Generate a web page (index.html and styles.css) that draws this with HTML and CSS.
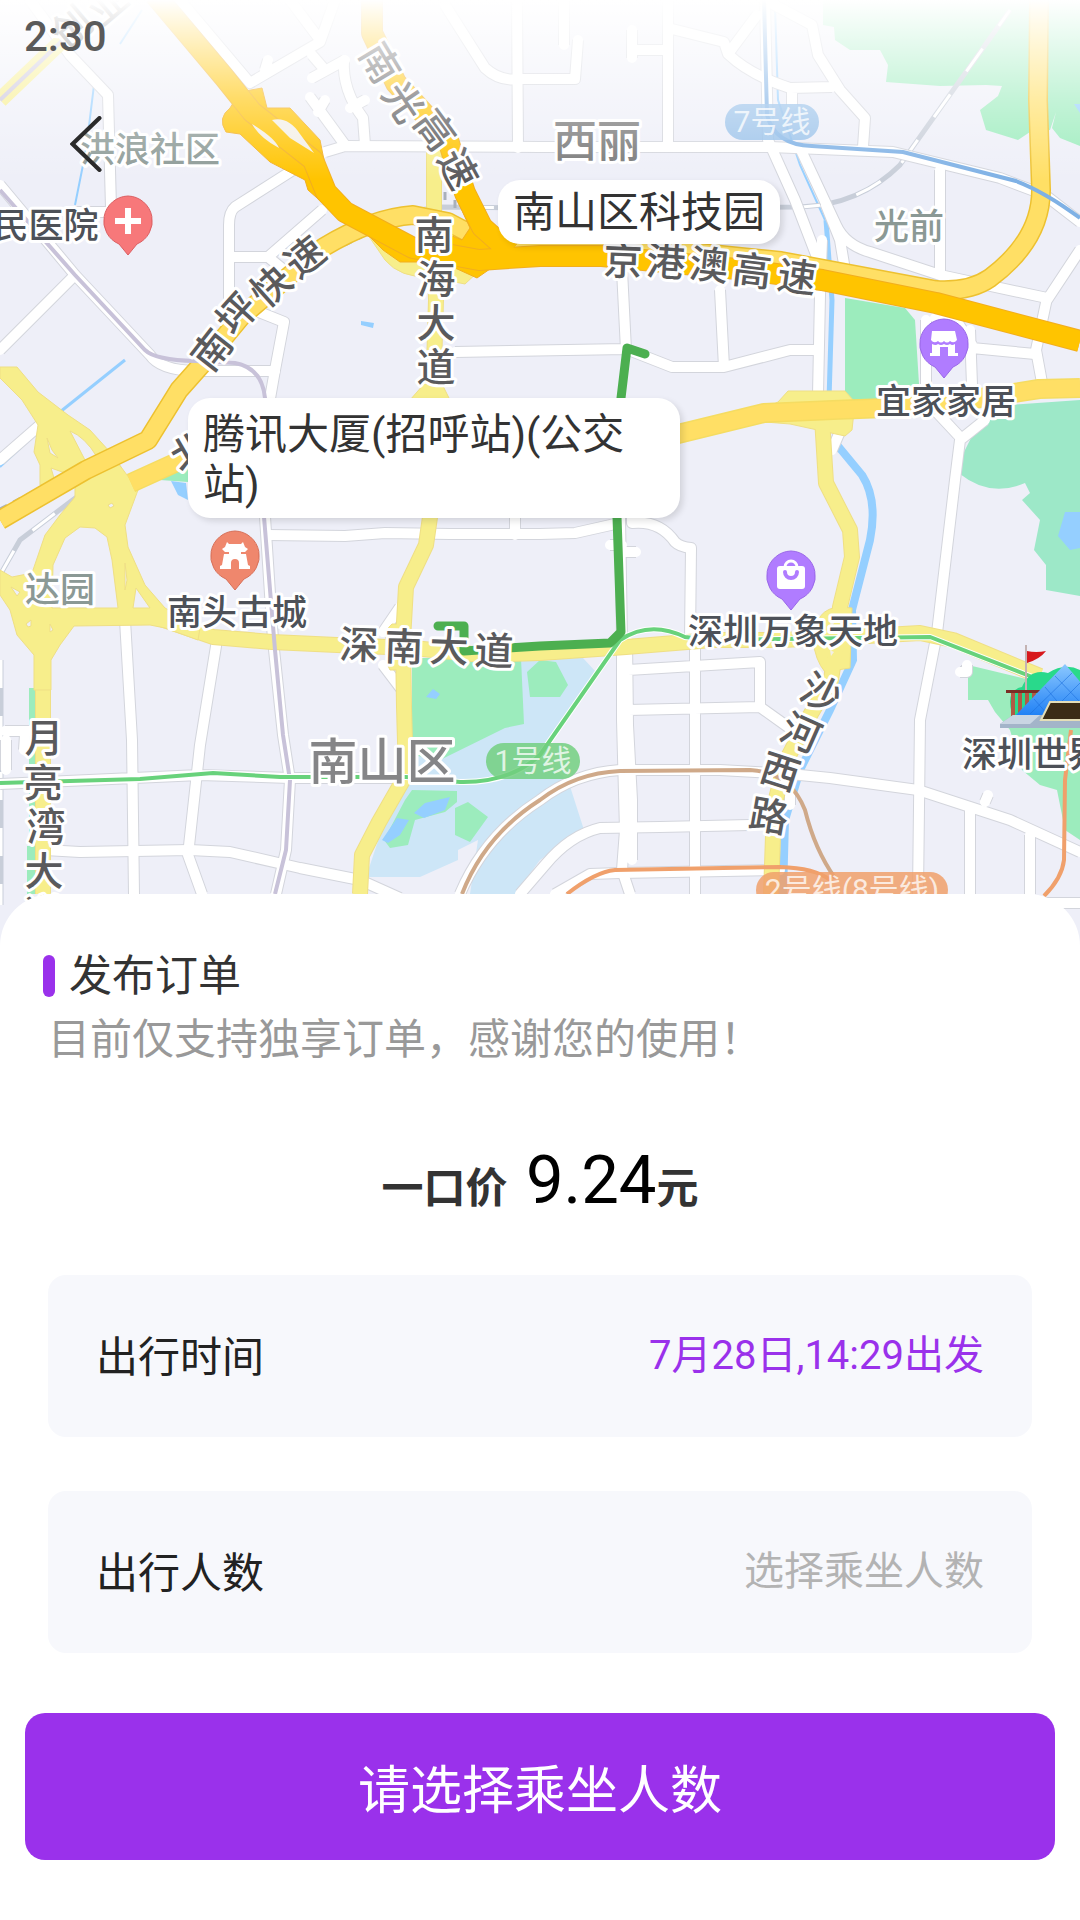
FILE: index.html
```html
<!DOCTYPE html>
<html lang="zh-CN">
<head>
  <meta charset="UTF-8">
  <meta name="viewport" content="width=device-width, initial-scale=1.0">
  <title>发布订单</title>
  <link rel="stylesheet" href="styles.css">
</head>
<body>
  <div class="map">
    <svg class="map-canvas" viewBox="0 0 1080 950">
      <defs>
        <linearGradient id="fade" x1="0" y1="0" x2="0" y2="1">
          <stop offset="0" stop-color="#fff"/>
          <stop offset="0.2" stop-color="#fff" stop-opacity="0.76"/>
          <stop offset="0.5" stop-color="#fff" stop-opacity="0.4"/>
          <stop offset="0.9" stop-color="#fff" stop-opacity="0"/>
        </linearGradient>
        <linearGradient id="glass" x1="0" y1="0" x2="0" y2="1">
          <stop offset="0" stop-color="#8cc8ff"/>
          <stop offset="1" stop-color="#1f80f5"/>
        </linearGradient>

        <!-- 普通道路 -->
        <g id="streets">
          <path d="M30 0 L70 55 L108 95 L111 208 M0 185 L75 275 L150 355 Q160 370 195 371 L275 371 M75 275 L0 350 M65 212 H108"/>
          <path d="M0 460 L40 425 M325 152 L345 146 L540 147 L770 147 L893 152 L1000 178 L1045 195 L1080 222"/>
          <path d="M293 170 L235 207 Q229 212 229 225 L229 300 L284 322 L275 370 L268 410 M232 257 L268 257 L322 210 M268 257 L290 275"/>
          <path d="M180 0 L250 83 L320 42 L335 0 M290 0 L320 40 M265 70 L268 60"/>
          <path d="M445 5 L485 68 Q500 82 520 79 L540 79 L575 79 L578 40 M517 0 L518 148"/>
          <path d="M344 60 Q342 90 363 118 L365 145 M310 97 L345 145 M345 60 L312 78 M365 100 L350 108 M325 100 L318 112 M312 55 L325 70"/>
          <path d="M564 0 V45 M668 0 L668 147 M632 30 L632 58 M632 50 H665 M668 28 L724 42 L728 54 Q750 75 790 88 L832 87 M728 54 L757 15 M765 0 L812 25 L818 55 L840 90 L865 118 L863 147 M792 88 L792 105"/>
          <path d="M765 0 L768 140 L795 200 L820 265 M800 148 L836 225 Q845 245 870 252 L940 275 L1047 298 M940 170 L940 272 L960 310 M1047 300 L1080 250 M1047 298 L1036 350 L1043 388"/>
          <path d="M822 240 L820 295 L818 395 M826 205 L840 240 L845 270 M622 270 L626 350 M720 290 L724 367 M455 352 L626 349 L672 367 L724 367 L790 350 L818 350"/>
          <path d="M926 320 L926 385 M970 330 L972 385 M972 348 L1035 354 M956 320 L972 345 M935 318 H955"/>
          <path d="M985 420 L960 440 L955 480 L937 633 L920 720 L918 894 M958 435 L930 405 M845 420 L832 450"/>
          <path d="M268 535 L345 536 L385 533 L450 534 L540 534 L575 533 L615 524 M515 517 V535 M632 517 V523 Q660 520 675 542 Q680 547 691 548 L690 640 M610 545 H622 M622 552 H636 M620 517 L622 640"/>
          <path d="M125 620 L132 740 L134 894 M217 640 L200 745 L188 855 L202 894 M0 784 L45 782 L200 775 L290 778 L410 778"/>
          <path d="M45 850 L80 852 L190 850 L230 852 L300 868 L360 880 L400 898 M265 517 L273 640 L283 735 L290 780 L286 850 L276 894"/>
          <path d="M6 740 L6 770 M5 731 H35 M25 735 L24 750 M400 607 L383 632 M383 665 L402 690"/>
          <path d="M622 650 L622 720 L625 830 L622 870 L630 894 M627 640 L628 725 L632 800 L632 860 M695 640 V894 M628 670 L760 662 L760 707 L795 732 M628 710 L760 707"/>
          <path d="M460 894 Q485 835 540 800 Q575 773 620 770 L720 770 L790 774 L830 778 L918 790 L1010 820 L1080 852"/>
          <path d="M520 894 L545 865 Q570 835 600 828 L660 827 L750 825 M555 894 L590 874 L620 873 L780 870 M970 810 V894 M1030 835 V894 M985 802 L988 795 M967 665 L967 672 H960 M1045 903 H1080 M790 790 V805"/>
        </g>
        <!-- 黄色主干道 -->
        <g id="avenues">
          <path d="M434 143 L434 215 L436 300 L433 400 L430 517 L426 545 L406 587 L403 640 L404 707 L406 775 L379 822 L362 855 L360 894"/>
          <path d="M60 617 L155 617 L213 637 L272 642 L337 645 L413 648 L482 655 L540 653 L626 647 L712 640 L781 640 L850 637 L920 633 L953 640 L1040 676"/>
          <path d="M822 418 L826 483 L850 530 L852 557 L840 607 L836 647 L831 680 L809 717 L785 763 L774 807 L771 894"/>
          <path d="M43 680 V894"/>
        </g>
        <path id="expressway" d="M0 520 L86 470 L148 440 L179 390 L203 363 L241 317 L296 270 L324 247 Q372 218 413 215 L448 222 L482 240 L540 248 L643 247 L781 261 L936 290 Q970 292 990 278 Q1041 240 1041 190 L1038 100 L1039 0"/>
        <path id="expressway2" d="M131 483 L186 458 L300 430 L678 434 L764 413 L833 410 L912 407 L988 397 L1039 389 L1080 388"/>
        <path id="freeway" d="M155 -5 L224 77 L252 112 L313 160 L326 192 L345 212 L413 248 L479 260 L540 256 L602 256 L747 270 L822 280 L936 303 L1080 341"/>
        <path id="freeway2" d="M372 -5 L372 33 L396 83 L448 140 L465 193 L482 227 L510 252"/>
      </defs>

      <rect class="land" width="1080" height="950"/>

      <!-- 绿地 -->
      <path class="park" d="M823 0 H1080 V146 L1060 138 L1052 128 L1056 112 L1050 130 L1030 132 L1018 140 L986 130 L980 110 L998 96 L1002 86 L986 85 L940 86 L886 82 L888 65 L880 50 L850 50 L835 40 L834 27 L823 25 Z"/>
      <path class="park" d="M845 298 L905 308 L915 320 L920 400 H845 Z"/>
      <path class="park-deep" d="M1080 400 L1010 405 L975 430 L960 460 L960 474 Q990 498 1025 483 L1030 493 L1022 500 L1040 520 L1034 550 L1046 565 L1046 590 L1080 596 Z"/>
      <path class="park" d="M968 665 L1030 680 L1080 700 V840 L1065 830 L1057 790 L1040 785 L1022 770 L1010 730 L995 712 L988 700 L968 700 Z"/>
      <path class="park" d="M29 688 H36 V894 H27 V846 H29 Z M160 480 L188 460 V482 Z"/>
      <path class="bay" d="M412 720 L540 650 L583 658 L596 672 L540 760 L568 780 L584 830 L540 860 L515 894 H470 L478 840 L458 850 L458 860 L420 877 L366 877 L380 835 L408 775 Z"/>
      <path class="park" d="M412 658 H521 L524 724 L505 728 L440 760 L412 755 Z"/>
      <path class="park" d="M527 672 L540 660 L556 662 L568 685 L560 697 L530 697 Z M405 800 L412 790 L457 791 V802 L445 812 L415 820 L408 845 L390 848 L384 840 Z M455 808 L468 802 L488 817 L470 842 L455 835 Z"/>
      <path class="river" d="M414 813 L425 803 L450 797 L445 810 L424 818 Z M382 840 L397 818 L409 820 L400 835 L388 843 Z M426 697 L433 689 L440 694 L436 699 Z M171 481 L186 483 L188 500 L178 495 Z M361 321 L374 323 L373 328 L361 325 Z M1065 512 H1080 V548 L1070 550 L1058 536 Z M1074 104 H1080 V113 Z"/>
      <path class="canal thin" d="M94 85 L86 150 L75 205 M142 10 L120 44 M60 412 L0 467 M775 5 L778 100 L800 165 L825 220"/>
      <path class="canal narrow" d="M125 360 L60 412"/>
      <path class="canal" d="M826 220 L832 300 L829 400"/>
      <path class="canal wide" d="M833 440 L862 475 Q878 500 870 540 L852 610 L853 660 L830 710 L800 770 L785 820 L783 894"/>

      <!-- 铁路 -->
      <path class="rail" d="M360 235 L400 213 L440 207 L540 208 L800 207 Q860 205 900 165 L1010 10 M0 575 L20 540 L70 502 L120 465 M1 660 V905"/>
      <path class="rail-dash" d="M360 235 L400 213 L440 207 L540 208 L800 207 Q860 205 900 165 L1010 10 M0 575 L20 540 L70 502 L120 465 M1 660 V905"/>
      <path class="rail-dots" d="M0 509 L75 470 M345 245 L375 230 M445 192 V205 M455 200 V212"/>

      <use class="street-edge" href="#streets"/>
      <use class="street" href="#streets"/>
      <use class="avenue-edge" href="#avenues"/>
      <path class="junction" d="M778 402 L788 391 L845 391 L855 402 L852 430 L845 436 L790 424 L740 420 Z M840 607 Q815 608 813 640 Q815 660 825 672 L850 668 L852 608 Z M392 624 L403 624 V670 L390 670 Q384 660 386 645 Q384 630 392 624 Z M368 235 L385 260 Q400 278 430 277 L465 284 L480 270 Z M424 384 L410 400 H450 L442 384 Z"/>
      <use class="avenue" href="#avenues"/>
      <path class="avenue-side" d="M0 100 L65 38"/>
      <!-- 立交桥 -->
      <path class="junction" fill-rule="evenodd" d="M0 367 H17 L38 392 L68 415 L90 430 L110 452 L138 490 L125 525 L128 547 L145 585 L165 608 L200 628 L198 640 L165 628 L150 625 L74 626 L60 645 L51 660 L51 690 H34 V655 L17 635 L10 610 L0 595 V570 L12 577 L32 573 L45 535 L60 515 L75 497 L75 485 H40 V465 L34 452 L38 425 L22 400 L0 378 Z
        M52 608 L53 565 L65 538 L80 527 L95 528 L107 537 L112 560 L118 608 Z
        M136 588 L133 608 H150 Z M125 563 L127 580 L125 590 Z
        M47 438 L52 450 L58 458 L50 453 Z M51 468 L68 474 L54 478 Z M70 431 L85 460 L97 457 Q85 437 70 431 Z
        M108 505 L112 503 L114 506 L110 508 Z M11 587 L20 592 L17 596 Z M26 624 L31 620 L31 626 L28 627 Z M50 624 L53 630 L50 632 Z"/>
      <path class="gap" d="M830 621 L834 623 L831 628 Z M830 650 L834 652 L831 656 Z"/>

      <use class="expressway-edge" href="#expressway"/>
      <use class="expressway-edge soft" href="#expressway2"/>
      <use class="expressway" href="#expressway2"/>
      <use class="expressway" href="#expressway"/>
      <path class="knot" d="M240 92 L262 88 L267 108 L290 108 L320 140 L330 190 L375 222 L420 240 L450 235 L462 240 L470 228 L455 195 L470 190 L485 222 L500 228 V262 L477 278 L455 268 L420 262 L400 262 L383 250 L365 232 L325 205 L308 190 L305 180 L270 162 L240 134 L226 132 Q217 118 230 108 Z"/>
      <use class="freeway-edge" href="#freeway"/>
      <use class="freeway-edge" href="#freeway2"/>
      <use class="freeway" href="#freeway2"/>
      <use class="freeway" href="#freeway"/>
      <path class="gap" d="M272 120 Q288 116 300 134 L314 153 L290 138 Z M252 124 Q275 138 279 148 Q260 138 252 124 Z"/>

      <!-- 地铁 -->
      <path class="metro metro-gray" d="M0 190 L75 275 L145 350 Q155 360 195 361 L235 363 Q262 368 265 398 L264 517 L275 650 L283 735 L290 780 L286 850 L275 894"/>
      <path class="metro metro-gray" d="M0 100 L65 38"/>
      <path class="metro metro-blue" d="M764 0 L767 115 Q775 145 812 146 L903 152 L1016 181 Q1045 192 1080 218"/>
      <path class="metro-line-edge" d="M0 783 L140 779 L213 773 L280 777 L406 777 L460 782 Q510 783 540 755 L620 640 Q650 620 685 637 L712 640 L930 637 L1040 680"/>
      <path class="metro metro-green" d="M0 783 L140 779 L213 773 L280 777 L406 777 L460 782 Q510 783 540 755 L620 640 Q650 620 685 637 L712 640 L930 637 L1040 680"/>
      <path class="metro metro-brown" d="M462 894 Q485 835 540 800 Q575 773 620 771 L750 770 Q790 772 805 810 Q815 850 835 878"/>
      <path class="metro metro-orange" d="M567 894 Q595 872 615 870 L780 867 Q815 868 830 880 M1071 730 L1065 780 L1064 860 Q1062 878 1044 896"/>

      <!-- 行车路线 -->
      <path class="route" d="M645 354 L627 348 L621 398 L617 517 L621 632 L610 643 L540 646 L464 651 L464 626 H438"/>

      <!-- 世界之窗 -->
      <g class="landmark">
        <path fill="#29d98b" d="M1012 714 Q1005 690 1022 687 Q1030 668 1048 673 Q1065 662 1080 670 V715 H1012 Z"/>
        <path d="M1013 692 V716 M1020 692 V716 M1027 692 V716 M1034 692 V716" stroke="#b05a45" stroke-width="4"/>
        <rect x="1006" y="690" width="34" height="3" fill="#7a2f25"/>
        <path d="M1026 645 V690" stroke="#c4b3b3" stroke-width="2"/>
        <path fill="#d7181c" d="M1027 651 Q1036 653 1046 651 Q1040 659 1027 663 Z"/>
        <path fill="url(#glass)" d="M1065 664 L1100 705 L1080 716 H1015 Z"/>
        <path d="M1055 676 L1080 702 M1045 687 L1068 714 M1034 699 L1048 715 M1072 673 L1030 714 M1080 683 L1048 715" stroke="#1c6fdd" stroke-opacity="0.6"/>
        <path fill="#a3b4c9" d="M1000 724 L1013 715 H1080 V728 H1000 Z"/>
        <path fill="#c9d5e3" d="M1000 724 L1013 715 H1040 L1030 724 Z"/>
        <path fill="#3b2c16" stroke="#e4deb8" stroke-width="2" d="M1050 702 H1090 V720 H1041 Z"/>
      </g>

      <!-- 地点标记 -->
      <g class="pin pin-red" transform="translate(128 221)">
        <path d="M0 -25 A25 25 0 0 1 9 23 L0 34 L-9 23 A25 25 0 0 1 0 -25 Z"/>
        <path class="pin-icon" d="M-3 -13 H3 V-3 H13 V3 H3 V13 H-3 V3 H-13 V-3 H-3 Z"/>
      </g>
      <g class="pin pin-coral" transform="translate(235 556)">
        <path d="M0 -25 A25 25 0 0 1 9 23 L0 34 L-9 23 A25 25 0 0 1 0 -25 Z"/>
        <path class="pin-icon" d="M-8 -14 L-6 -12 H6 L8 -14 L10 -9 L13 -7 L10 -4 H6 V-2 H11 L13 9 L15 10 V13 H4 V7 A4 4 0 0 0 -4 7 V13 H-15 V10 L-13 9 L-11 -2 H-6 V-4 H-10 L-13 -7 L-10 -9 Z"/>
      </g>
      <g class="pin pin-purple" transform="translate(944 344)">
        <path d="M0 -25 A25 25 0 0 1 9 23 L0 34 L-9 23 A25 25 0 0 1 0 -25 Z"/>
        <path class="pin-icon" d="M-12 -13 H11 L13 -4 Q10 0 6 -3 Q3 0 0 -3 Q-3 0 -6 -3 Q-10 0 -13 -4 Z M-12 0 Q-8 2 -6 0 Q-3 2 0 0 Q3 2 6 0 Q8 2 11 0 V9 H14 V12 H4 V3 H-4 V12 H-14 V9 H-12 Z"/>
      </g>
      <g class="pin pin-purple" transform="translate(791 576)">
        <path d="M0 -25 A25 25 0 0 1 9 23 L0 34 L-9 23 A25 25 0 0 1 0 -25 Z"/>
        <rect class="pin-icon" x="-14" y="-10" width="28" height="23" rx="3"/>
        <path class="pin-handle" d="M-6 -9 A6 6 0 0 1 6 -9"/>
        <path class="pin-smile" d="M-6 -4 A6 6 0 0 0 6 -4"/>
      </g>

      <!-- 地铁线路名 -->
      <g class="line-tag">
        <rect x="725" y="104" width="94" height="36" rx="18" fill="#8dbbe8"/>
        <text x="772" y="132">7号线</text>
        <rect x="486" y="743" width="94" height="36" rx="18" fill="#72cf80"/>
        <text x="533" y="771">1号线</text>
        <rect x="756" y="872" width="192" height="36" rx="18" fill="#f0a06b"/>
        <text x="852" y="900">2号线(8号线)</text>
      </g>

      <!-- 道路名 -->
      <g class="road-name">
        <text transform="translate(72 27) rotate(-40)" y="14">创</text>
        <text transform="translate(108 4) rotate(-40)" y="14">业</text>
        <text transform="translate(380 63) rotate(59)" y="14">南</text>
        <text transform="translate(403 102) rotate(56)" y="14">光</text>
        <text transform="translate(435 130) rotate(54)" y="14">高</text>
        <text transform="translate(458 169) rotate(62)" y="14">速</text>
        <text transform="translate(212 350) rotate(-52)" y="14">南</text>
        <text transform="translate(237 314) rotate(-48)" y="14">坪</text>
        <text transform="translate(271 286) rotate(-42)" y="14">快</text>
        <text transform="translate(305 257) rotate(-38)" y="14">速</text>
        <text x="434" y="249">南</text>
        <text x="436" y="293">海</text>
        <text x="436" y="337">大</text>
        <text x="436" y="381">道</text>
        <text transform="translate(623 261) rotate(2)" y="14">京</text>
        <text transform="translate(666 262) rotate(4)" y="14">港</text>
        <text transform="translate(709 265) rotate(6)" y="14">澳</text>
        <text transform="translate(752 271) rotate(7)" y="14">高</text>
        <text transform="translate(797 277) rotate(8)" y="14">速</text>
        <text transform="translate(821 693) rotate(26)" y="14">沙</text>
        <text transform="translate(801 733) rotate(24)" y="14">河</text>
        <text transform="translate(780 772) rotate(18)" y="14">西</text>
        <text transform="translate(769 816) rotate(10)" y="14">路</text>
        <text transform="translate(359 645) rotate(2)" y="14">深</text>
        <text transform="translate(404 647) rotate(2)" y="14">南</text>
        <text transform="translate(449 648) rotate(2)" y="14">大</text>
        <text transform="translate(494 651) rotate(2)" y="14">道</text>
        <text x="44" y="752">月</text>
        <text x="43" y="797">亮</text>
        <text x="46" y="841">湾</text>
        <text x="44" y="885">大</text>
        <text x="44" y="928">道</text>
        <text transform="translate(191 452) rotate(-30)" y="14">北</text>
      </g>

      <!-- 地名 -->
      <g class="place-name">
        <text x="150" y="162">洪浪社区</text>
        <text x="909" y="239">光前</text>
        <text x="60" y="602">达园</text>
      </g>
      <g class="poi-name">
        <text x="46" y="238">民医院</text>
        <text x="946" y="414">宜家家居</text>
        <text x="237" y="625">南头古城</text>
        <text x="793" y="644">深圳万象天地</text>
        <text x="1032" y="767">深圳世界</text>
      </g>
      <text class="town-name" x="597" y="157">西丽</text>
      <text class="district-name" x="382" y="779">南山区</text>

      <rect width="1080" height="200" fill="url(#fade)"/>
    </svg>

    <div class="status-time">2:30</div>
    <button class="back" aria-label="返回">
      <svg viewBox="0 0 30 54"><path d="M28 2 L2 27 L28 52"/></svg>
    </button>
    <div class="bubble bubble-end">南山区科技园</div>
    <div class="bubble bubble-start">腾讯大厦(招呼站)(公交站)</div>
  </div>

  <form class="sheet">
    <h1 class="title">发布订单</h1>
    <p class="tip">目前仅支持独享订单，感谢您的使用！</p>
    <p class="price"><b>一口价</b> <span class="amount">9.24</span><b>元</b></p>
    <div class="field">
      <label for="tripTime">出行时间</label>
      <input id="tripTime" type="text" value="7月28日,14:29出发" readonly>
    </div>
    <div class="field">
      <label for="tripPeople">出行人数</label>
      <input id="tripPeople" type="text" placeholder="选择乘坐人数" readonly>
    </div>
    <button class="submit" type="button">请选择乘坐人数</button>
  </form>
</body>
</html>
```
FILE: styles.css
```css
* {
  box-sizing: border-box;
}
body {
  margin: 0;
  background: #fff;
  font-family: Roboto, "Noto Sans CJK SC", sans-serif;
  color: #333;
}
.map {
  position: relative;
  overflow: hidden;
}
.map-canvas {
  display: block;
  width: 100%;
  height: auto;
}

/* 地图底图 */
.land { fill: #eeeff8; }
.park { fill: #9cecbd; }
.park-deep { fill: #9de8c8; }
.bay { fill: #cde6f7; }
.river { fill: #95cfff; }
.canal {
  fill: none;
  stroke: #95cfff;
  stroke-width: 5;
}
.canal.thin { stroke-width: 2; }
.canal.narrow { stroke-width: 3; }
.canal.wide { stroke-width: 8; }
.rail, .rail-dash, .rail-dots {
  fill: none;
  stroke: #c8ced9;
  stroke-width: 5;
}
.rail-dash {
  stroke: #fff;
  stroke-width: 3;
  stroke-dasharray: 28 28;
}
.rail-dots {
  stroke: #a9b0bb;
  stroke-width: 3;
  stroke-dasharray: 8 7;
}
.street, .street-edge, .avenue, .avenue-edge,
.expressway, .expressway-edge, .freeway, .freeway-edge {
  fill: none;
  stroke-linejoin: round;
}
.street-edge { stroke: #d3d5dc; stroke-width: 12; }
.street { stroke: #fff; stroke-width: 10; stroke-linecap: round; }
.avenue-edge { stroke: #efdf85; stroke-width: 16; }
.avenue { stroke: #f7ee8b; stroke-width: 14; }
.avenue-side { stroke: #f7ee8b; stroke-width: 16; }
.junction { fill: #f7ee8b; stroke: #efdf85; }
.expressway-edge { stroke: #edc130; stroke-width: 20; }
.expressway-edge.soft { stroke: #f5dc62; }
.expressway { stroke: #ffdf65; stroke-width: 17; }
.freeway-edge { stroke: #f2ae1e; stroke-width: 22; }
.freeway { stroke: #ffc400; stroke-width: 20; }
.knot { fill: #ffc400; stroke: #f2ae1e; }
.gap { fill: #f3efe6; }
.metro {
  fill: none;
  stroke-width: 4;
}
.metro-line-edge {
  fill: none;
  stroke: #fff;
  stroke-width: 6;
}
.metro-gray { stroke: #c8c2d9; }
.metro-blue { stroke: #7fb1e5; }
.metro-green { stroke: #68d27b; }
.metro-brown { stroke: #cfa989; }
.metro-orange { stroke: #f0a06b; }
.route {
  fill: none;
  stroke: #4caf50;
  stroke-width: 9;
  stroke-linecap: round;
  stroke-linejoin: round;
}

/* 标记 */
.pin-red { fill: #f7787a; stroke: #dc5f62; }
.pin-coral { fill: #ef876d; stroke: #d77059; }
.pin-purple { fill: #b07cff; stroke: #9a68e8; }
.pin .pin-icon { fill: #fff; stroke: none; }
.pin-handle { fill: none; stroke: #fff; stroke-width: 3; }
.pin-smile { fill: none; stroke: #b07cff; stroke-width: 4; stroke-linecap: round; }

/* 地图文字 */
.map-canvas text {
  font-family: Roboto, "Noto Sans CJK SC", sans-serif;
  font-weight: 500;
  text-anchor: middle;
  stroke: #fff;
  stroke-width: 6px;
  stroke-linejoin: round;
  paint-order: stroke;
}
.road-name { fill: #5a5a5c; font-size: 39px; }
.poi-name { fill: #4d5158; font-size: 35px; }
.place-name { fill: #8b9995; font-size: 35px; }
.town-name { fill: #777; font-size: 44px; }
.district-name { fill: #858587; font-size: 49px; }
.line-tag rect { opacity: 0.85; }
.map-canvas .line-tag text {
  fill: #fff;
  fill-opacity: 0.75;
  font-size: 30px;
  font-weight: 400;
  stroke: none;
}

/* 地图上的浮层 */
.status-time {
  position: absolute;
  top: 12px;
  left: 24px;
  font-size: 42px;
  line-height: 50px;
  font-weight: 500;
  color: #5a5a5a;
}
.back {
  position: absolute;
  top: 112px;
  left: 66px;
  padding: 4px;
  border: 0;
  background: none;
  cursor: pointer;
}
.back svg {
  display: block;
  width: 32px;
  height: 56px;
  fill: none;
  stroke: #2b2b2b;
  stroke-width: 4;
  stroke-linecap: round;
}
.bubble {
  position: absolute;
  padding: 8px 15px 6px;
  border-radius: 22px;
  background: #fff;
  box-shadow: 3px 3px 6px rgba(0, 0, 0, 0.12);
  font-size: 42px;
  line-height: 50px;
}
.bubble-end {
  top: 180px;
  left: 498px;
}
.bubble-start {
  top: 398px;
  left: 188px;
  width: 492px;
  padding: 12px 15px 8px;
}

/* 订单面板 */
.sheet {
  position: relative;
  margin-top: -56px;
  padding: 46px 48px 60px;
  border-radius: 52px 52px 0 0;
  background: #fff;
}
.title {
  display: flex;
  align-items: center;
  gap: 14px;
  margin: 0 -5px;
  font-size: 43px;
  line-height: 72px;
  font-weight: 400;
}
.title::before {
  content: "";
  width: 12px;
  height: 42px;
  border-radius: 6px;
  background: #9a31eb;
}
.tip {
  margin: 0;
  font-size: 42px;
  line-height: 56px;
  color: #999;
}
.price {
  margin: 72px 0 46px;
  font-size: 42px;
  line-height: 80px;
  text-align: center;
}
.amount {
  margin-left: 8px;
  font-size: 67px;
  color: #000;
}
.field {
  display: flex;
  align-items: center;
  justify-content: space-between;
  height: 162px;
  margin-bottom: 54px;
  padding: 0 48px;
  border-radius: 18px;
  background: #f7f8fc;
}
.field label {
  padding-bottom: 6px;
  font-size: 42px;
  color: #222;
}
.field input {
  flex: 1;
  min-width: 0;
  padding: 0;
  border: 0;
  outline: 0;
  background: none;
  font: inherit;
  font-size: 40px;
  line-height: 56px;
  text-align: right;
  color: #9a31eb;
}
.field input::placeholder {
  color: #b3b3b3;
}
.submit {
  display: block;
  width: calc(100% + 46px);
  height: 147px;
  margin: 60px -23px 0;
  border: 0;
  border-radius: 20px;
  background: #9a31eb;
  color: #fff;
  font: inherit;
  font-size: 52px;
  cursor: pointer;
}
```
